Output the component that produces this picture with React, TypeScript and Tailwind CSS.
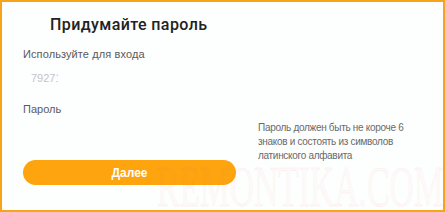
export default function App() {
  return (
    <div className="relative w-[445px] h-[212px] overflow-hidden border-2 border-[#f7a41b] bg-[#fdfefe] font-['Liberation_Sans',Arial,sans-serif]">
      <h1 className="pl-[48px] pt-[13px] text-[16px] leading-[20px] font-medium text-[#222] tracking-[0.4px] font-['Roboto',sans-serif]">
        Придумайте пароль
      </h1>

      <div className="pl-[21px] pt-[12px]">
        <div className="text-[11px] leading-[14px] text-[#5a5a5a] tracking-[0.1px]">Используйте для входа</div>
        <div className="mt-[10px] ml-[8px] w-[27px] overflow-hidden whitespace-nowrap text-[11px] leading-[14px] text-[#c4c4c4]">
          79271
        </div>
      </div>

      <div className="flex pl-[21px] pt-[17px]">
        <div className="flex flex-col w-[213px]">
          <div className="text-[11px] leading-[14px] text-[#5a5a5a]">Пароль</div>
          <button
            type="button"
            className="mt-[44px] h-[25px] w-[213px] rounded-full bg-[#fda40f] text-white text-[12px] font-bold"
          >
            Далее
          </button>
        </div>
        <div className="ml-[22px] pt-[19px] w-[160px] text-[10px] leading-[14px] tracking-[-0.3px] text-[#6a6a6a]">
          Пароль должен быть не короче 6 знаков и состоять из символов латинского алфавита
        </div>
      </div>

      {/* watermark */}
      <div className="pointer-events-none absolute left-[155px] top-[150px] origin-left scale-x-[0.6] whitespace-nowrap font-['Liberation_Serif',serif] text-[56px] leading-[70px] text-[rgba(255,120,120,0.03)] [-webkit-text-stroke:0.6px_rgba(240,90,90,0.14)]">
        REMONTIKA.COM
      </div>
    </div>
  );
}
